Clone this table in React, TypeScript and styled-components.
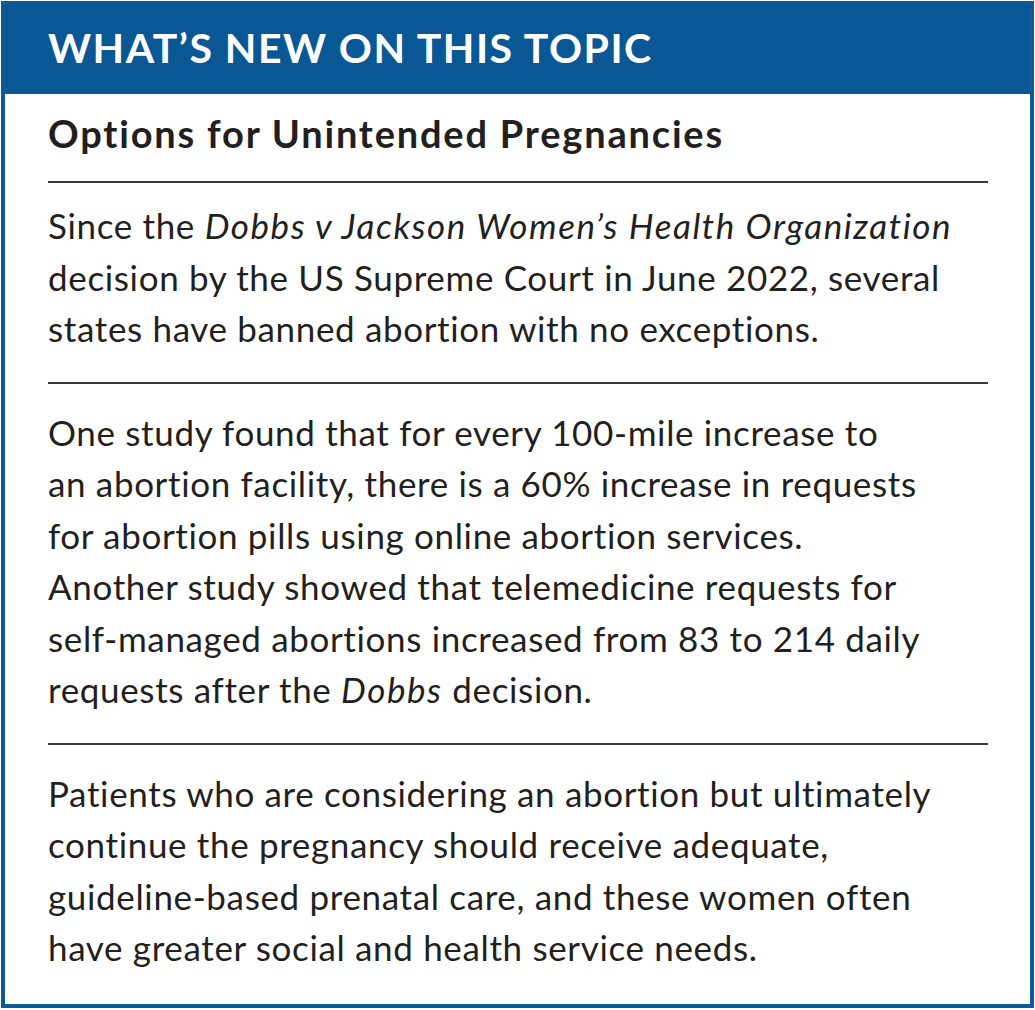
import styled, { createGlobalStyle } from "styled-components";

const GlobalStyle = createGlobalStyle`
  html, body {
    margin: 0;
    padding: 0;
    background: #ffffff;
  }
  body {
    padding: 1px;
    font-family: Lato, "Liberation Sans", sans-serif;
  }
`;

type Section = {
  id: string;
  lines: React.ReactNode[];
};

const sections: Section[] = [
  {
    id: "dobbs",
    lines: [
      <>
        Since the <em>Dobbs v Jackson Women’s Health Organization</em>
      </>,
      "decision by the US Supreme Court in June 2022, several",
      "states have banned abortion with no exceptions.",
    ],
  },
  {
    id: "studies",
    lines: [
      "One study found that for every 100-mile increase to",
      "an abortion facility, there is a 60% increase in requests",
      "for abortion pills using online abortion services.",
      "Another study showed that telemedicine requests for",
      "self-managed abortions increased from 83 to 214 daily",
      <>
        requests after the <em>Dobbs</em> decision.
      </>,
    ],
  },
  {
    id: "care",
    lines: [
      "Patients who are considering an abortion but ultimately",
      "continue the pregnancy should receive adequate,",
      "guideline-based prenatal care, and these women often",
      "have greater social and health service needs.",
    ],
  },
];

function App() {
  return (
    <>
      <GlobalStyle />
      <Box>
        <Header>
          <HeaderTitle>WHAT’S NEW ON THIS TOPIC</HeaderTitle>
        </Header>
        <Body>
          <Topic>Options for Unintended Pregnancies</Topic>
          {sections.map((section, i) => (
            <Block key={section.id} $first={i === 0}>
              {section.lines.map((line, j) => (
                <Line key={j}>{line}</Line>
              ))}
            </Block>
          ))}
        </Body>
      </Box>
    </>
  );
}

const Box = styled.div`
  border: 4px solid #0d5a98;
  background: #ffffff;
`;

const Header = styled.div`
  background: #0a5795;
  padding: 19px 43px 22px;
`;

const HeaderTitle = styled.h1`
  margin: 0;
  color: #ffffff;
  font-size: 41px;
  font-weight: 700;
  line-height: 48px;
  letter-spacing: 1.5px;
`;

const Body = styled.div`
  padding: 16px 42px 3px 43px;
  color: #231f20;
`;

const Topic = styled.h2`
  margin: 0 0 25px;
  font-size: 38px;
  font-weight: 700;
  line-height: 46px;
  letter-spacing: 1.8px;
`;

const Block = styled.div<{ $first: boolean }>`
  border-top: 2px solid #3a3a3a;
  padding: ${(p) => (p.$first ? "17px" : "23px")} 0 27px;
  font-size: 35px;
  line-height: 51.5px;
  letter-spacing: 0.65px;

  & em {
    font-style: italic;
    letter-spacing: 1.55px;
  }
`;

const Line = styled.div`
  white-space: nowrap;
`;

export default App;
